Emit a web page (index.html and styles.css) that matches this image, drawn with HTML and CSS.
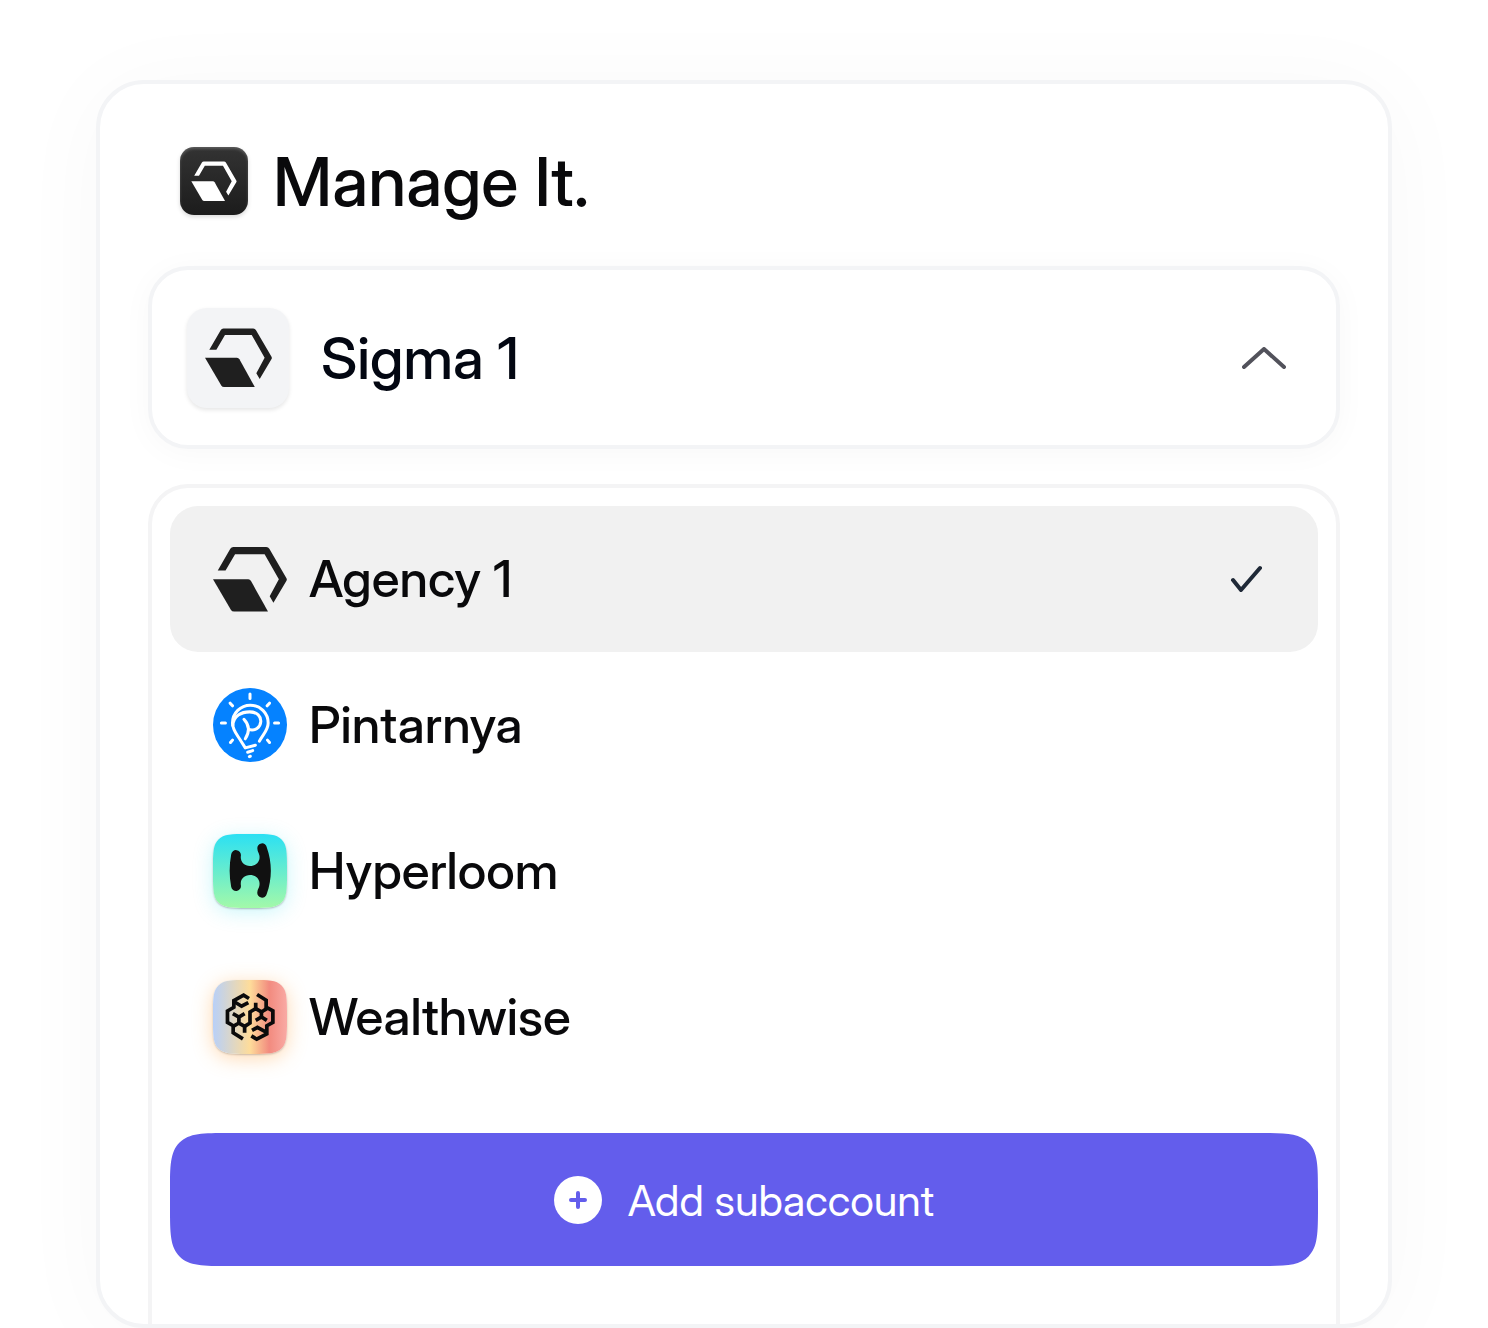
FILE: index.html
```html
<!DOCTYPE html>
<html lang="en">
<head>
    <meta charset="UTF-8">
    <meta name="viewport" content="width=device-width, initial-scale=1.0">
    <title>Manage It.</title>
    <link rel="stylesheet" href="styles.css">
</head>
<body>
    <!-- Shared logo mark -->
    <svg class="symbols" aria-hidden="true">
        <symbol id="mark" viewBox="0 0 218 192">
            <path d="M14 71 L51 7 Q54 2 60 2 H157 Q163 2 166 7 L216 93 Q219 97 216 102 L178 166 L167 147 L194 97 L152 23 H65 L37 71 Z"/>
            <path d="M0 97 H104 Q109 97 112 102 L162 192 H62 Q56 192 53 187 Z"/>
        </symbol>
    </svg>

    <main class="card">
        <header class="brand">
            <span class="brand-icon"><svg><use href="#mark"/></svg></span>
            <h1>Manage It.</h1>
        </header>

        <button type="button" class="account" aria-expanded="true" aria-controls="account-menu">
            <span class="account-icon"><svg><use href="#mark"/></svg></span>
            <span class="account-name">Sigma 1</span>
            <svg class="chevron" viewBox="0 0 44 22" aria-hidden="true"><path d="M2 20 L22 2 L42 20"/></svg>
        </button>

        <div class="menu" id="account-menu">
            <ul class="account-list">
                <li>
                    <button type="button" class="option selected" aria-current="true">
                        <svg class="option-icon"><use href="#mark"/></svg>
                        <span>Agency 1</span>
                        <svg class="check" viewBox="0 0 32 28" aria-hidden="true"><path d="M3 15 L11 25 L30 3"/></svg>
                    </button>
                </li>
                <li>
                    <button type="button" class="option">
                        <svg class="option-icon" viewBox="40 39 220 220" aria-hidden="true">
                            <circle cx="150" cy="149" r="110" fill="#0582ff"/>
                            <g fill="none" stroke="#fff" stroke-width="9" stroke-linecap="round" stroke-linejoin="round">
                                <path d="M178 197 C188 177 204 165 204 143 A53 53 0 0 0 98 143 C98 165 112 178 124 198 L136 217 L166 209"/>
                                <path d="M99 150 C101 122 124 110 149 110 C172 110 183 124 182 139 C181 156 165 168 146 162"/>
                                <path d="M132 132 C147 148 150 168 136 190"/>
                                <path d="M143 230 L158 225 M148 243 L151 242"/>
                                <path d="M150 57 V70 M91 84 L98 92 M208 84 L201 92 M65 143 H77 M223 143 H235 M98 194 L92 201 M202 194 L208 201"/>
                            </g>
                        </svg>
                        <span>Pintarnya</span>
                    </button>
                </li>
                <li>
                    <button type="button" class="option">
                        <svg class="option-icon hyperloom" viewBox="40 42 220 220" aria-hidden="true">
                            <path fill="#111" d="M94 103 A14 14 0 0 1 123 106 C120 124 132 137 150 137 C168 137 181 124 178 106 C176 98 172 93 172 86 A14 14 0 0 1 200 82 C216 128 216 174 200 220 A14 14 0 0 1 172 214 C172 207 177 203 178 195 C181 177 168 164 150 164 C132 164 120 177 123 195 A14 14 0 0 1 94 199 C88 167 88 135 94 103 Z"/>
                        </svg>
                        <span>Hyperloom</span>
                    </button>
                </li>
                <li>
                    <button type="button" class="option">
                        <svg class="option-icon wealthwise" viewBox="40 44 220 220" aria-hidden="true">
                            <g fill="none" stroke="#0b0b0b" stroke-width="11">
                                <path d="M147 99 L131 89 L102 105 V125 L83 136 V170 L100 180 V201 L129 219"/>
                                <path d="M102 108 L125 122 L145 111"/>
                                <path d="M99 144 L117 154 L134 144 M117 154 V172 L100 182 M117 172 L134 182 V201"/>
                                <path d="M134 182 L150 172 V139 L167 129 L184 139 L200 129"/>
                                <path d="M171 87 L198 104 V125 L218 136 V170 L200 180 V204 L170 220 L154 210"/>
                                <path d="M167 129 V112 M167 164 L184 154 L200 164 M184 154 V139 M156 194 L172 185 L198 199"/>
                            </g>
                        </svg>
                        <span>Wealthwise</span>
                    </button>
                </li>
            </ul>

            <button type="button" class="add-button">
                <svg class="plus" viewBox="0 0 48 48" aria-hidden="true">
                    <circle cx="24" cy="24" r="24"/>
                    <path d="M24 17 V31 M17 24 H31"/>
                </svg>
                <span>Add subaccount</span>
            </button>
        </div>
    </main>
</body>
</html>
```

FILE: styles.css
```css
* {
    box-sizing: border-box;
}
body {
    margin: 0;
    padding: 80px 96px 0;
    background-color: #fff;
    color: #09090b;
    font-family: "Inter Display", Inter, sans-serif;
    font-weight: 500;
}
button {
    font: inherit;
    color: inherit;
    cursor: pointer;
}
.symbols {
    position: absolute;
    width: 0;
    height: 0;
}
.card {
    padding: 59px 48px 0;
    overflow: hidden;
    background-color: #fff;
    border: 4px solid #f3f4f6;
    border-radius: 48px;
    box-shadow: 0 8px 96px rgba(0, 0, 0, 0.03);
}
.brand {
    display: flex;
    align-items: center;
    gap: 25px;
    height: 76px;
    margin-bottom: 47px;
    padding-left: 32px;
}
.brand-icon {
    display: flex;
    align-items: center;
    justify-content: center;
    width: 68px;
    height: 68px;
    border-radius: 14px;
    background: linear-gradient(#333, #1c1c1c);
    box-shadow: inset 0 2px 3px rgba(255, 255, 255, 0.2), 0 2px 4px rgba(0, 0, 0, 0.15);
}
.brand-icon svg {
    width: 46px;
    height: 40px;
    fill: #fff;
}
h1 {
    margin: 0;
    font-size: 68px;
    font-weight: 500;
    line-height: 76px;
}
.account {
    display: flex;
    align-items: center;
    gap: 32px;
    width: 100%;
    height: 183px;
    padding: 0 50px 0 35px;
    background-color: #fff;
    border: 4px solid #f3f4f6;
    border-radius: 40px;
    box-shadow: 0 4px 32px rgba(0, 0, 0, 0.03);
    color: #030712;
    font-size: 58px;
    text-align: left;
}
.account-icon {
    display: flex;
    align-items: center;
    justify-content: center;
    width: 102px;
    height: 100px;
    border-radius: 20px;
    background-color: #f3f4f6;
    box-shadow: 0 2px 4px rgba(0, 0, 0, 0.1);
}
.account-icon svg {
    width: 67px;
    height: 59px;
    fill: #1f1f1f;
}
.chevron {
    width: 44px;
    height: 22px;
    margin-left: auto;
    fill: none;
    stroke: #52525b;
    stroke-width: 4;
    stroke-linecap: round;
    stroke-linejoin: round;
}
.menu {
    margin-top: 35px;
    padding: 18px 18px 58px;
    border: 4px solid #f4f4f5;
    border-bottom: 0;
    border-radius: 40px 40px 0 0;
}
.account-list {
    margin: 0 0 43px;
    padding: 0;
    list-style: none;
}
.option {
    display: flex;
    align-items: center;
    gap: 22px;
    width: 100%;
    height: 146px;
    padding: 0 56px 0 43px;
    background: none;
    border: 0;
    border-radius: 28px;
    font-size: 51px;
    line-height: 60px;
    text-align: left;
}
.selected {
    background-color: #f1f1f1;
}
.option-icon {
    width: 74px;
    height: 74px;
    fill: #1f1f1f;
}
.hyperloom,
.wealthwise {
    border-radius: 34px;
    corner-shape: squircle;
}
.hyperloom {
    background: linear-gradient(#2be0f3, #a3f9a9);
    box-shadow: 0 1px 2px rgba(0, 0, 0, 0.25), 0 4px 20px rgba(44, 224, 240, 0.25);
}
.wealthwise {
    background: linear-gradient(90deg, #b8d0f8, #fedc9a 50%, #f28b7f 76%, #f9aaa4);
    box-shadow: 0 1px 2px rgba(0, 0, 0, 0.2), 0 4px 20px rgba(255, 170, 80, 0.45);
}
.check {
    width: 32px;
    height: 28px;
    margin-left: auto;
    fill: none;
    stroke: #1f2937;
    stroke-width: 4;
    stroke-linecap: round;
    stroke-linejoin: round;
}
.add-button {
    display: flex;
    align-items: center;
    justify-content: center;
    gap: 26px;
    width: 100%;
    height: 133px;
    padding: 0;
    background-color: #635dec;
    border: 0;
    border-radius: 60px;
    corner-shape: squircle;
    color: #fff;
    font-size: 43px;
    font-weight: 400;
    line-height: 50px;
}
.plus {
    width: 48px;
    height: 48px;
    fill: #fff;
}
.plus path {
    stroke: #635dec;
    stroke-width: 4;
    stroke-linecap: round;
}
```
